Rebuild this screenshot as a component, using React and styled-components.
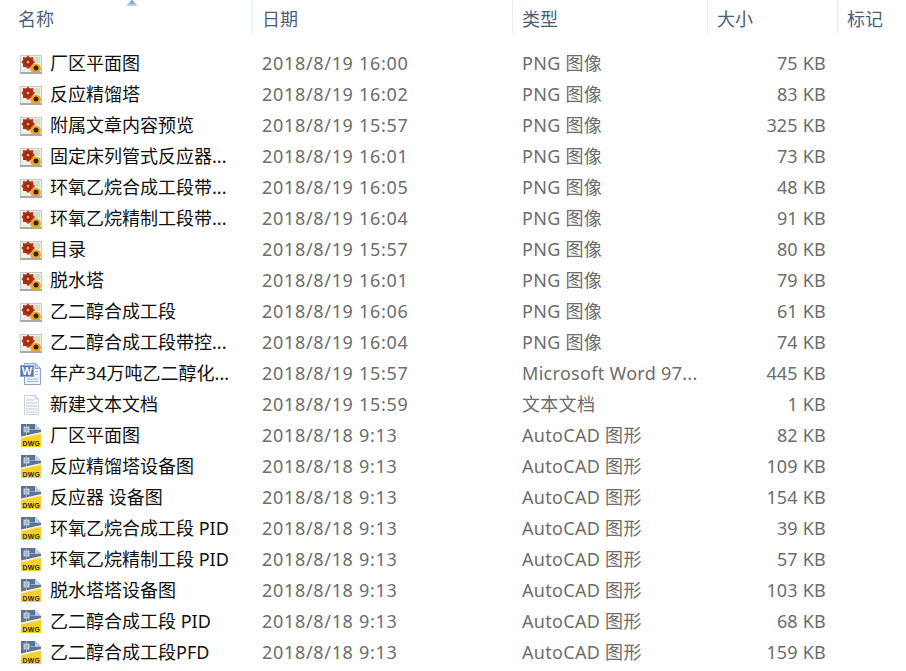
import React from 'react';
import styled, { createGlobalStyle } from 'styled-components';

const Global = createGlobalStyle`
  html, body { margin: 0; padding: 0; background: #fff; }
  body { width: 906px; height: 671px; overflow: hidden; font-family: "Noto Sans", "Noto Sans CJK SC", sans-serif; }
`;

const COLS = '252px 260px 195px 130px 69px';

const Page = styled.div`
  width: 906px;
  height: 671px;
  overflow: hidden;
  background: #fff;
`;
const Header = styled.div`
  position: relative;
  display: grid;
  grid-template-columns: ${COLS};
  height: 33px;
  margin-bottom: 15px;
`;
const SortArrow = styled.svg`
  position: absolute;
  left: 125px;
  top: 0;
`;
const HeaderCell = styled.div`
  display: flex;
  align-items: center;
  height: 33px;
  box-sizing: border-box;
  padding-left: ${p => p.$first ? 18 : 9}px;
  padding-top: 3px;
  border-left: ${p => p.$first ? 'none' : '1px solid #e3ecf6'};
  font-size: 18px;
  color: #4a5f7c;
`;
const List = styled.div`
  display: flex;
  flex-direction: column;
`;
const Row = styled.div`
  display: grid;
  grid-template-columns: ${COLS};
  height: 31px;
  align-items: center;
  font-size: 18px;
  line-height: 31px;
  white-space: nowrap;
`;
const NameCell = styled.div`
  display: flex;
  align-items: center;
  gap: 8px;
  padding-left: 20px;
  color: #111;
`;
const DateCell = styled.div`
  padding-left: 10px;
  color: #6d6d6d;
  letter-spacing: 0.68px;
`;
const TypeCell = styled.div`
  padding-left: 10px;
  color: #6d6d6d;
  letter-spacing: 0.3px;
`;
const SizeCell = styled.div`
  text-align: right;
  padding-right: 11px;
  color: #6d6d6d;
  letter-spacing: 0.2px;
`;
const IconBox = styled.svg`
  flex: none;
  width: 22px;
  height: 24px;
`;

const PngIcon = () => (
  <IconBox viewBox="0 0 22 24">
    <rect x="0.5" y="3.5" width="21" height="17" fill="#eef0e6" stroke="#c8c8c4" />
    <rect x="0" y="20" width="22" height="2" fill="#a9a9a6" />
    <rect x="13" y="5" width="7" height="6" fill="#d5dcc4" />
    <path d="M8 3.5L10 5.500L13 5L13 8L15 10L13 12L13.500 15L10.500 15L8 17L6 15L3 15L3 12L1.500 10L3 8L3 5L6 5.500Z" fill="#b4301b" />
    <circle cx="8" cy="10" r="3.500" fill="#9c2412" />
    <circle cx="8" cy="10" r="1.500" fill="#d8b52e" />
    <path d="M10 17L12 12.500L16 11.500L20 13L21 17L20 20H11.500Z" fill="#eea71a" />
    <circle cx="16" cy="16" r="2.500" fill="#33240e" />
  </IconBox>
);

const WordIcon = () => (
  <IconBox viewBox="0 0 22 24">
    <path d="M4.500 1.500H15L20.500 6.500V22.500H4.500Z" fill="#eef3fb" stroke="#8ea6cd" />
    <path d="M15 1.500V6.500H20.500Z" fill="#c3d2e8" stroke="#8ea6cd" />
    <path d="M7 17H18M7 19.500H18M15 9.500H18M15 12.500H18" stroke="#a7bcdb" />
    <rect x="0.500" y="3.500" width="13" height="11" fill="#5578bd" stroke="#8fa9d6" />
    <text x="7" y="13" textAnchor="middle" fontSize="11" fontWeight="700" fontFamily="Liberation Sans" fill="#fff">W</text>
  </IconBox>
);

const TextIcon = () => (
  <IconBox viewBox="0 0 22 24">
    <path d="M4.500 2.500H15L18.500 6V21.500H4.500Z" fill="#f7f8f9" stroke="#cfd3d8" />
    <path d="M15 2.500V6H18.500Z" fill="#dfe2e6" stroke="#cfd3d8" />
    <path d="M6 7H14M6 10H17M6 13H17M6 16H17M6 19H17" stroke="#c4cbd3" />
  </IconBox>
);

const DwgIcon = () => (
  <IconBox viewBox="0 0 22 24">
    <path d="M1 0H15L21 6V23H1Z" fill="#587397" />
    <path d="M15 0V6H21Z" fill="#c3cfdd" />
    <rect x="4" y="3" width="5" height="5" fill="#a3b5ca" stroke="#dfe6ee" strokeWidth="0.800" />
    <path d="M6.500 0V13M9 5.500H20" stroke="#a9bacd" strokeWidth="0.700" />
    <path d="M1 12.500L21 8V11L1 15.500Z" fill="#f7efbd" />
    <path d="M1 14.500L21 10V23H1Z" fill="#f6d02a" />
    <text x="2.500" y="22" fontSize="6.800" fontWeight="700" fontFamily="Liberation Sans" letterSpacing="0.300" fill="#2a2a1c">DWG</text>
  </IconBox>
);

const ICONS = { png: PngIcon, word: WordIcon, text: TextIcon, dwg: DwgIcon };

const FILES = [
  ['png', '厂区平面图', '2018/8/19 16:00', 'PNG 图像', '75 KB'],
  ['png', '反应精馏塔', '2018/8/19 16:02', 'PNG 图像', '83 KB'],
  ['png', '附属文章内容预览', '2018/8/19 15:57', 'PNG 图像', '325 KB'],
  ['png', '固定床列管式反应器...', '2018/8/19 16:01', 'PNG 图像', '73 KB'],
  ['png', '环氧乙烷合成工段带...', '2018/8/19 16:05', 'PNG 图像', '48 KB'],
  ['png', '环氧乙烷精制工段带...', '2018/8/19 16:04', 'PNG 图像', '91 KB'],
  ['png', '目录', '2018/8/19 15:57', 'PNG 图像', '80 KB'],
  ['png', '脱水塔', '2018/8/19 16:01', 'PNG 图像', '79 KB'],
  ['png', '乙二醇合成工段', '2018/8/19 16:06', 'PNG 图像', '61 KB'],
  ['png', '乙二醇合成工段带控...', '2018/8/19 16:04', 'PNG 图像', '74 KB'],
  ['word', '年产34万吨乙二醇化...', '2018/8/19 15:57', 'Microsoft Word 97...', '445 KB'],
  ['text', '新建文本文档', '2018/8/19 15:59', '文本文档', '1 KB'],
  ['dwg', '厂区平面图', '2018/8/18 9:13', 'AutoCAD 图形', '82 KB'],
  ['dwg', '反应精馏塔设备图', '2018/8/18 9:13', 'AutoCAD 图形', '109 KB'],
  ['dwg', '反应器 设备图', '2018/8/18 9:13', 'AutoCAD 图形', '154 KB'],
  ['dwg', '环氧乙烷合成工段 PID', '2018/8/18 9:13', 'AutoCAD 图形', '39 KB'],
  ['dwg', '环氧乙烷精制工段 PID', '2018/8/18 9:13', 'AutoCAD 图形', '57 KB'],
  ['dwg', '脱水塔塔设备图', '2018/8/18 9:13', 'AutoCAD 图形', '103 KB'],
  ['dwg', '乙二醇合成工段 PID', '2018/8/18 9:13', 'AutoCAD 图形', '68 KB'],
  ['dwg', '乙二醇合成工段PFD', '2018/8/18 9:13', 'AutoCAD 图形', '159 KB'],
];

export default function App() {
  return (
    <Page>
      <Global />
      <Header>
        <SortArrow width="14" height="6" viewBox="0 0 14 6">
          <defs>
            <linearGradient id="sortFill" x1="0" y1="0" x2="0" y2="1">
              <stop offset="0" stopColor="#4d86b4" />
              <stop offset="1" stopColor="#bfe3f7" />
            </linearGradient>
          </defs>
          <path d="M1 6L7 0L13 6Z" fill="url(#sortFill)" />
        </SortArrow>
        <HeaderCell $first>名称</HeaderCell>
        <HeaderCell>日期</HeaderCell>
        <HeaderCell>类型</HeaderCell>
        <HeaderCell>大小</HeaderCell>
        <HeaderCell>标记</HeaderCell>
      </Header>
      <List>
        {FILES.map(([kind, name, date, type, size], i) => {
          const Icon = ICONS[kind];
          return (
            <Row key={i}>
              <NameCell><Icon />{name}</NameCell>
              <DateCell>{date}</DateCell>
              <TypeCell>{type}</TypeCell>
              <SizeCell>{size}</SizeCell>
            </Row>
          );
        })}
      </List>
    </Page>
  );
}
